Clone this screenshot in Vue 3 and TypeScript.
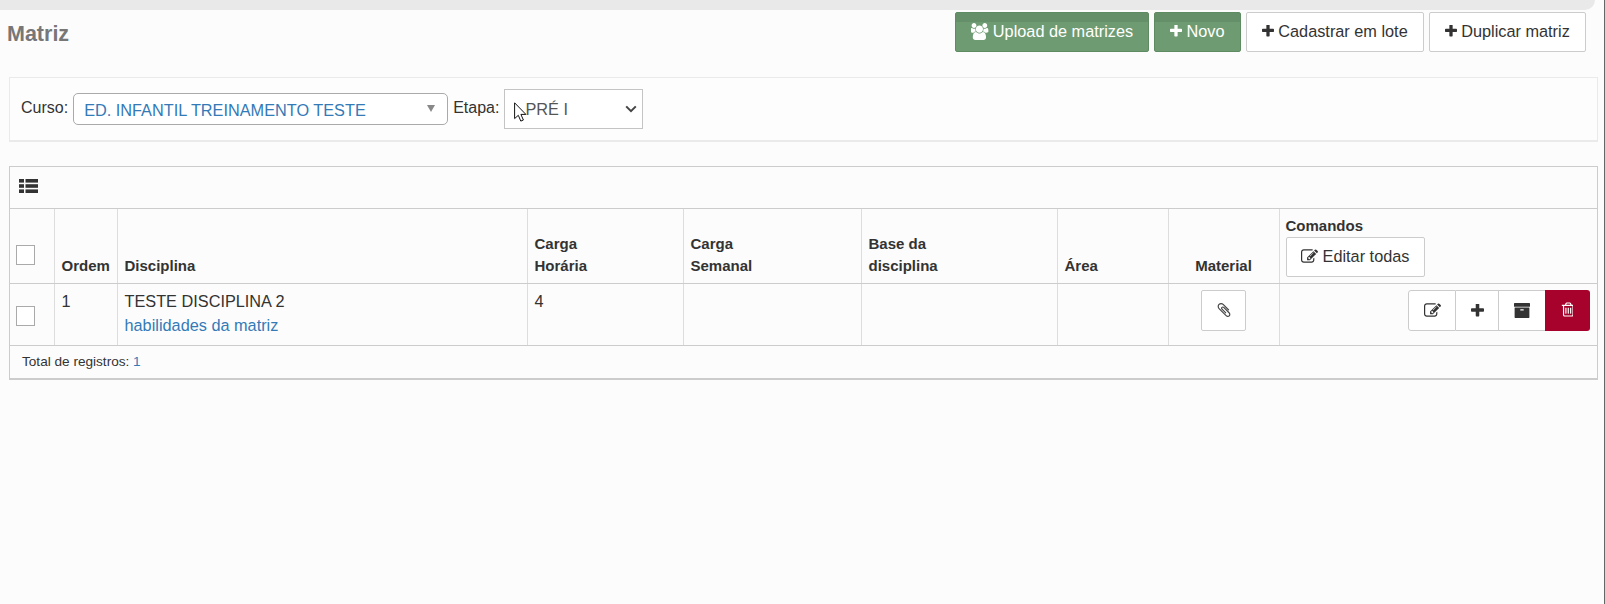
<script setup lang="ts">
interface Head { label: string[]; cls: string }
const heads: Head[] = [
  { label: ['Carga', 'Horária'], cls: 'c4' },
  { label: ['Carga', 'Semanal'], cls: 'c5' },
  { label: ['Base da', 'disciplina'], cls: 'c6' },
  { label: ['Área'], cls: 'c7' },
]
const plus = 'M1600 736v192q0 40-28 68t-68 28h-416v416q0 40-28 68t-68 28h-192q-40 0-68-28t-28-68v-416h-416q-40 0-68-28t-28-68v-192q0-40 28-68t68-28h416v-416q0-40 28-68t68-28h192q40 0 68 28t28 68v416h416q40 0 68 28t28 68z'
const pen = 'M888 1184l116-116-152-152-116 116v56h96v96h56zm440-720q-16-16-33 1l-350 350q-17 17-1 33t33-1l350-350q17-17 1-33zm80 594v190q0 119-84.500 203.500t-203.500 84.500h-832q-119 0-203.500-84.500t-84.500-203.500v-832q0-119 84.500-203.500t203.500-84.500h832q63 0 117 25 15 7 18 23 3 17-9 29l-49 49q-14 14-32 8-23-6-45-6h-832q-66 0-113 47t-47 113v832q0 66 47 113t113 47h832q66 0 113-47t47-113v-126q0-13 9-22l64-64q15-15 35-7t20 29zm-96-738l288 288-672 672h-288v-288zm444 132l-92 92-288-288 92-92q28-28 68-28t68 28l152 152q28 28 28 68t-28 68z'
</script>

<template>
  <div class="page">
    <div class="topbar"></div>
    <header class="head">
      <h1 class="title">Matriz</h1>
      <div class="actions">
        <button class="btn green upload">
          <svg class="ic users" viewBox="0 0 1920 1792"><path fill="currentColor" d="M529 896q-162 5-265 128h-134q-82 0-138-40.500t-56-118.500q0-353 124-353 6 0 43.500 21t97.500 42.500 119 21.500q67 0 133-23-5 37-5 66 0 139 81 256zm1071 637q0 120-73 189.500t-194 69.500h-874q-121 0-194-69.500t-73-189.500q0-53 3.500-103.500t14-109 26.500-108.500 43-97.500 62-81 85.500-53.500 111.500-20q10 0 43 21.500t73 48 107 48 135 21.500 135-21.500 107-48 73-48 43-21.500q61 0 111.500 20t85.500 53.500 62 81 43 97.500 26.500 108.500 14 109 3.500 103.500zm-1024-1277q0 106-75 181t-181 75-181-75-75-181 75-181 181-75 181 75 75 181zm704 384q0 159-112.500 271.500t-271.500 112.500-271.500-112.500-112.500-271.500 112.500-271.500 271.500-112.500 271.500 112.500 112.500 271.500zm576 225q0 78-56 118.500t-138 40.500h-134q-103-123-265-128 81-117 81-256 0-29-5-66 66 23 133 23 59 0 119-21.500t97.500-42.500 43.500-21q124 0 124 353zm-128-609q0 106-75 181t-181 75-181-75-75-181 75-181 181-75 181 75 75 181z"/></svg>
          <span>Upload de matrizes</span>
        </button>
        <button class="btn green novo">
          <svg class="ic plus" viewBox="192 192 1408 1408"><path fill="currentColor" :d="plus"/></svg>
          <span>Novo</span>
        </button>
        <button class="btn lote">
          <svg class="ic plus" viewBox="192 192 1408 1408"><path fill="currentColor" :d="plus"/></svg>
          <span>Cadastrar em lote</span>
        </button>
        <button class="btn dup">
          <svg class="ic plus" viewBox="192 192 1408 1408"><path fill="currentColor" :d="plus"/></svg>
          <span>Duplicar matriz</span>
        </button>
      </div>
    </header>

    <section class="filter">
      <span class="lbl">Curso:</span>
      <div class="combo">
        <span>ED. INFANTIL TREINAMENTO TESTE</span>
        <i class="tri"></i>
      </div>
      <span class="lbl etapa">Etapa:</span>
      <div class="sel">
        <span>PRÉ I</span>
        <svg class="chev" viewBox="0 0 12 8"><path d="M1.2 1.400 6 6.200l4.800-4.800" fill="none" stroke="#444" stroke-width="2"/></svg>
        <svg class="cursor" viewBox="0 0 13 20"><path d="M.6.800v15.800l3.700-3.300 2.500 5.800 2.600-1.100-2.500-5.600h5z" fill="#fff" stroke="#111" stroke-width="1"/></svg>
      </div>
    </section>

    <section class="grid">
      <div class="grid-tools">
        <svg class="listic" viewBox="0 0 19 14" fill="#333">
          <rect x="0" y="0" width="5" height="3.600"/><rect x="6.500" y="0" width="12.500" height="3.600"/>
          <rect x="0" y="5.200" width="5" height="3.600"/><rect x="6.500" y="5.200" width="12.500" height="3.600"/>
          <rect x="0" y="10.400" width="5" height="3.600"/><rect x="6.500" y="10.400" width="12.500" height="3.600"/>
        </svg>
      </div>
      <table class="tbl">
        <colgroup>
          <col class="w1"/><col class="w2"/><col class="w3"/><col class="w4"/><col class="w5"/><col class="w6"/><col class="w7"/><col class="w8"/><col class="w9"/>
        </colgroup>
        <thead>
          <tr>
            <th class="chk"><span class="box headbox"></span></th>
            <th>Ordem</th>
            <th>Disciplina</th>
            <th v-for="h in heads" :key="h.label.join()">
              <template v-for="(l, i) in h.label" :key="l"><br v-if="i"/>{{ l }}</template>
            </th>
            <th class="center">Material</th>
            <th class="cmd">
              <div class="cmd-t">Comandos</div>
              <button class="btn edit-all">
                <svg class="ic pen" viewBox="0 128 1792 1408"><path fill="currentColor" :d="pen"/></svg>
                <span>Editar todas</span>
              </button>
            </th>
          </tr>
        </thead>
        <tbody>
          <tr>
            <td class="chk"><span class="box"></span></td>
            <td>1</td>
            <td>TESTE DISCIPLINA 2<br/><a class="link">habilidades da matriz</a></td>
            <td>4</td>
            <td></td>
            <td></td>
            <td></td>
            <td class="center mat">
              <button class="btn clip" aria-label="Material">
                <svg viewBox="128 128 1536 1536" width="14" height="14"><path fill="#444" d="M1596 1385q0 117-79 196t-196 79q-135 0-235-100l-777-776q-113-115-113-271 0-159 110-270t269-111q158 0 273 113l605 606q10 10 10 22 0 16-30.500 46.500t-46.500 30.500q-13 0-23-10l-606-607q-79-77-181-77-106 0-179 75t-73 181q0 105 76 181l776 777q63 63 145 63 64 0 106-42t42-106q0-82-63-145l-581-581q-26-24-60-24-29 0-48 19t-19 48q0 32 25 59l410 410q10 10 10 22 0 16-31 47t-47 31q-12 0-22-10l-410-410q-63-61-63-149 0-82 57-139t139-57q88 0 149 63l581 581q100 98 100 235z"/></svg>
              </button>
            </td>
            <td class="ops">
              <div class="group">
                <button class="g g1" aria-label="Editar">
                  <svg class="ic pen" viewBox="0 128 1792 1408"><path fill="currentColor" :d="pen"/></svg>
                </button>
                <button class="g g2" aria-label="Adicionar">
                  <svg class="ic gplus" viewBox="192 192 1408 1408"><path fill="currentColor" :d="plus"/></svg>
                </button>
                <button class="g g3" aria-label="Arquivar">
                  <svg class="ic arch" viewBox="64 128 1664 1536"><path fill="currentColor" d="M1088 832q0-26-19-45t-45-19h-256q-26 0-45 19t-19 45 19 45 45 19h256q26 0 45-19t19-45zm576-192v960q0 26-19 45t-45 19h-1408q-26 0-45-19t-19-45v-960q0-26 19-45t45-19h1408q26 0 45 19t19 45zm64-448v256q0 26-19 45t-45 19h-1536q-26 0-45-19t-19-45v-256q0-26 19-45t45-19h1536q26 0 45 19t19 45z"/></svg>
                </button>
                <button class="g g4" aria-label="Excluir">
                  <svg class="ic trash" viewBox="0 128 1408 1536"><path fill="currentColor" d="M704 736v576q0 14-9 23t-23 9h-64q-14 0-23-9t-9-23v-576q0-14 9-23t23-9h64q14 0 23 9t9 23zm256 0v576q0 14-9 23t-23 9h-64q-14 0-23-9t-9-23v-576q0-14 9-23t23-9h64q14 0 23 9t9 23zm256 0v576q0 14-9 23t-23 9h-64q-14 0-23-9t-9-23v-576q0-14 9-23t23-9h64q14 0 23 9t9 23zm128 724v-948h-896v948q0 22 7 40.500t14.500 27 10.500 8.500h832q3 0 10.500-8.500t14.500-27 7-40.500zm-672-1076h448l-48-117q-7-9-17-11h-317q-10 2-17 11zm928 32v64q0 14-9 23t-23 9h-96v948q0 83-47 143.500t-113 60.500h-832q-66 0-113-58.500t-47-141.500v-952h-96q-14 0-23-9t-9-23v-64q0-14 9-23t23-9h309l70-167q15-37 54-63t79-26h320q40 0 79 26t54 63l70 167h309q14 0 23 9t9 23z"/></svg>
                </button>
              </div>
            </td>
          </tr>
        </tbody>
      </table>
      <div class="total">Total de registros: <span class="num">1</span></div>
    </section>
  </div>
</template>

<style>
html, body { margin: 0; background: #fcfcfc; }
</style>

<style scoped>
.page {
  width: 1605px;
  height: 604px;
  box-sizing: border-box;
  background: #fcfcfc;
  border-right: 1px solid #666;
  font-family: "Liberation Sans", Arial, sans-serif;
  font-size: 14px;
  color: #333;
  overflow: hidden;
}
.topbar {
  height: 10px;
  width: 1595px;
  background: #e9e9e9;
  border-bottom-right-radius: 10px;
}
.head {
  display: flex;
  justify-content: space-between;
  align-items: flex-start;
  padding: 2px 18px 0 7px;
}
.title {
  margin: 11px 0 0;
  font-size: 21.500px;
  line-height: 22px;
  font-weight: 700;
  color: #777;
}
.actions { display: flex; gap: 5px; }
.btn {
  box-sizing: border-box;
  height: 40px;
  padding: 0 0 2px;
  display: inline-flex;
  align-items: center;
  justify-content: center;
  gap: 4px;
  background: #fff;
  border: 1px solid #ccc;
  border-radius: 2px;
  color: #333;
  font: 16.300px "Liberation Sans", Arial, sans-serif;
}
.green {
  background: linear-gradient(#658f69 0 9px, #6f9b72 9px);
  border-color: #5f8b62;
  color: #fff;
}
.upload { width: 194px; }
.novo { width: 87px; }
.lote { width: 178px; }
.dup { width: 157px; }
.ic { display: block; flex: none; }
.users { width: 18px; height: 17px; }
.plus { width: 12px; height: 12px; }

.filter {
  box-sizing: border-box;
  margin: 25px 6px 0 9px;
  height: 65px;
  display: flex;
  align-items: center;
  padding: 0 0 0 11px;
  background: #fdfdfd;
  border: 1px solid #eaeaea;
  border-bottom-width: 2px;
}
.lbl { font-size: 16px; margin-top: -3px; }
.combo {
  box-sizing: border-box;
  width: 375px;
  height: 32px;
  margin-left: 5px;
  padding: 2px 12px 0 10px;
  display: flex;
  align-items: center;
  justify-content: space-between;
  border: 1px solid #aaa;
  border-radius: 5px;
  background: #fff;
  color: #337ab7;
  font-size: 16.300px;
}
.tri {
  width: 0; height: 0;
  margin-top: -3px;
  border-left: 4.500px solid transparent;
  border-right: 4.500px solid transparent;
  border-top: 7px solid #888;
}
.etapa { margin-left: 5px; }
.sel {
  position: relative;
  box-sizing: border-box;
  width: 139px;
  height: 40px;
  margin-left: 5px;
  padding: 1px 0 0 20px;
  display: flex;
  align-items: center;
  border: 1px solid #c4c4c4;
  background: #fff;
  color: #555;
  font-size: 16.300px;
}
.chev {
  position: absolute;
  right: 5px;
  top: 15px;
  width: 12px;
  height: 8px;
}
.cursor {
  position: absolute;
  left: 9px;
  top: 12px;
  width: 13px;
  height: 20px;
}

.grid {
  margin: 24px 6px 0 9px;
  box-sizing: border-box;
  height: 214px;
  border: 1px solid #ccc;
  border-bottom-width: 2px;
}
.grid-tools {
  box-sizing: border-box;
  height: 42px;
  padding: 12px 0 0 9px;
  border-bottom: 1px solid #ccc;
}
.listic { display: block; width: 19px; height: 14px; }
.tbl {
  width: 100%;
  table-layout: fixed;
  border-collapse: collapse;
}
.w1 { width: 44px; }
.w2 { width: 63px; }
.w3 { width: 410px; }
.w4 { width: 156px; }
.w5 { width: 178px; }
.w6 { width: 196px; }
.w7 { width: 111px; }
.w8 { width: 111px; }
.tbl th, .tbl td {
  border-right: 1px solid #ddd;
  border-bottom: 1px solid #ccc;
  padding: 5px 7px;
  text-align: left;
  box-sizing: border-box;
  color: #333;
}
.tbl th:last-child, .tbl td:last-child { border-right: 0; }
.tbl th {
  height: 74px;
  vertical-align: bottom;
  font-weight: 700;
  font-size: 15px;
  line-height: 22px;
  padding: 6px 7px 6px 7px;
}
.tbl td {
  height: 62px;
  vertical-align: top;
  font-size: 16.300px;
  line-height: 24px;
}
.tbl .center { text-align: center; }
.tbl th.chk, .tbl td.chk { padding: 0 0 0 6px; }
.box {
  display: block;
  box-sizing: border-box;
  width: 19px;
  height: 20px;
  border: 1px solid #aaa;
  background: #fff;
}
.tbl th.chk { vertical-align: middle; padding-top: 19px; }
.tbl td.chk { vertical-align: middle; padding-top: 4px; }
.link { color: #337ab7; }
.tbl th.cmd { padding: 8px 6px 5px 6px; line-height: 17px; vertical-align: top; }
.cmd-t { margin-bottom: 3px; }
.edit-all { width: 139px; gap: 5px; }
.pen { width: 17px; height: 14px; }
.tbl td.mat { padding: 6px 0 0; }
.clip { width: 45px; height: 41px; padding: 0; }
.tbl td.ops { padding: 6px 7px 0 0; }
.group {
  display: flex;
  justify-content: flex-end;
}
.g {
  box-sizing: border-box;
  height: 41px;
  padding: 0;
  display: flex;
  align-items: center;
  justify-content: center;
  background: #fff;
  border: 1px solid #ccc;
  border-left: 0;
  color: #333;
}
.g1 { width: 48px; border-left: 1px solid #ccc; border-radius: 3px 0 0 3px; }
.g2 { width: 43px; }
.g3 { width: 46px; border-right: 0; }
.g4 { width: 45px; background: #a6022b; border: 0; border-radius: 0 3px 3px 0; color: #fff; padding: 0 3px 2px 0; }
.gplus { width: 13px; height: 13px; }
.arch { width: 16px; height: 15px; }
.trash { width: 13px; height: 15px; }
.total {
  height: 33px;
  line-height: 31px;
  padding-left: 12px;
  font-size: 13.600px;
  color: #333;
}
.num { color: #337ab7; }
</style>
